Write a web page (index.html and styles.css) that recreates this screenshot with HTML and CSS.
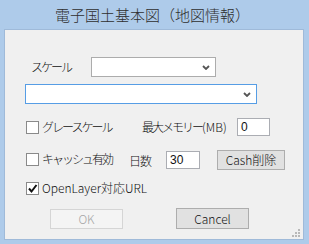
FILE: index.html
```html
<!DOCTYPE html>
<html lang="ja">
<head>
    <meta charset="UTF-8">
    <title>電子国土基本図（地図情報）</title>
    <link rel="stylesheet" href="styles.css">
</head>
<body>
    <div class="window">
        <div class="titlebar">電子国土基本図（地図情報）</div>
        <div class="panel">
            <div class="row scale-row">
                <span class="label kana scale-label">スケール</span>
                <div class="select select-scale">
                    <svg class="chevron" width="8" height="5" viewBox="0 0 8 5"><path d="M1 1 L4 4 L7 1" fill="none" stroke="#555" stroke-width="1.8"/></svg>
                </div>
            </div>
            <div class="row">
                <div class="select select-map focus">
                    <svg class="chevron" width="8" height="5" viewBox="0 0 8 5"><path d="M1 1 L4 4 L7 1" fill="none" stroke="#555" stroke-width="1.8"/></svg>
                </div>
            </div>
            <div class="row opt-row gray-row">
                <span class="check"></span>
                <span class="label kana opt-label gray-label">グレースケール</span>
                <span class="label kana mem-label">最大メモリー<span class="latin">(MB)</span></span>
                <span class="textbox mem-box">0</span>
            </div>
            <div class="row opt-row cache-row">
                <span class="check"></span>
                <span class="label kana opt-label cache-label">キャッシュ有効</span>
                <span class="label days-label">日数</span>
                <span class="textbox days-box">30</span>
                <button class="btn cash-btn">Cash削除</button>
            </div>
            <div class="row opt-row url-row">
                <span class="check checked">
                    <svg width="11" height="11" viewBox="0 0 11 11"><path d="M2 5.5 L4.5 8.5 L9.5 2" fill="none" stroke="#111" stroke-width="2"/></svg>
                </span>
                <span class="label opt-label latin">OpenLayer対応URL</span>
            </div>
            <div class="row button-row">
                <button class="btn dialog-btn" disabled>OK</button>
                <button class="btn dialog-btn cancel-btn">Cancel</button>
            </div>
            <svg class="grip" width="8" height="8" viewBox="0 0 8 8">
                <rect x="6" y="0" width="2" height="2" fill="#b8b8b8"/>
                <rect x="3" y="3" width="2" height="2" fill="#b8b8b8"/>
                <rect x="6" y="3" width="2" height="2" fill="#b8b8b8"/>
                <rect x="0" y="6" width="2" height="2" fill="#b8b8b8"/>
                <rect x="3" y="6" width="2" height="2" fill="#b8b8b8"/>
                <rect x="6" y="6" width="2" height="2" fill="#b8b8b8"/>
            </svg>
        </div>
    </div>
</body>
</html>
```

FILE: styles.css
```css
* {
    box-sizing: border-box;
}

body {
    margin: 0;
    padding: 0;
    font-family: "Noto Sans CJK JP", sans-serif;
    font-size: 12px;
    font-weight: 300;
    color: #111;
}

.window {
    width: 309px;
    height: 244px;
    background: #aecbea;
    padding: 0 5px 4px 4px;
    display: flex;
    flex-direction: column;
}

.titlebar {
    height: 29px;
    line-height: 29px;
    text-align: center;
    font-size: 15px;
    color: #2e2e2e;
    padding-right: 3px;
}

.panel {
    position: relative;
    flex: 1;
    background: #f0f0f0;
    border: 1px solid #9fbad9;
    padding: 27px 0 0 20px;
}

.row {
    display: flex;
    align-items: center;
}

.label {
    line-height: 14px;
    white-space: nowrap;
    letter-spacing: -1px;
}

.label.kana {
    letter-spacing: -2px;
}

.label .latin,
.label.latin {
    letter-spacing: 0;
}

.scale-row {
    height: 20px;
}

.scale-label {
    width: 60px;
    margin-left: 6px;
}

.select {
    position: relative;
    height: 20px;
    background: #fff;
    border: 1px solid #acacac;
}

.select-scale {
    width: 125px;
}

.select-map {
    width: 232px;
    margin-top: 7px;
}

.select.focus {
    border-color: #569de5;
}

.chevron {
    position: absolute;
    right: 5px;
    top: 7px;
}

.opt-row .check {
    margin-left: 1px;
}

.check {
    width: 13px;
    height: 13px;
    border: 1px solid #8a8a8a;
    background: #fff;
    display: flex;
    align-items: center;
    justify-content: center;
}

.opt-label {
    margin-left: 3px;
}

.gray-row {
    height: 18px;
    margin-top: 14px;
}

.gray-label {
    width: 100px;
}

.mem-label {
    width: 95px;
}

.textbox {
    height: 18px;
    background: #fff;
    border: 1px solid #abadb3;
    line-height: 16px;
    padding-left: 3px;
    font-family: "Liberation Sans", sans-serif;
    font-size: 12px;
    font-weight: 400;
}

.mem-box {
    width: 33px;
}

.cache-row {
    height: 20px;
    margin-top: 13px;
}

.cache-label {
    width: 87px;
}

.days-label {
    width: 37px;
    padding-top: 4px;
}

.days-box {
    width: 34px;
    margin-top: 2px;
}

.btn {
    height: 20px;
    padding: 0;
    background: #e1e1e1;
    border: 1px solid #adadad;
    font-family: "Noto Sans CJK JP", sans-serif;
    font-size: 12px;
    font-weight: 300;
    line-height: 16px;
    color: #111;
}

.cash-btn {
    width: 68px;
    margin-left: 17px;
    margin-top: 1px;
}

.url-row {
    height: 14px;
    margin-top: 12px;
}

.button-row {
    margin-top: 13px;
    padding-left: 25px;
}

.dialog-btn {
    width: 73px;
}

.dialog-btn:disabled {
    background: #f4f4f4;
    border-color: #d5d5d5;
    color: #a5a5a5;
}

.cancel-btn {
    margin-left: 53px;
    height: 21px;
}

.grip {
    position: absolute;
    right: 3px;
    bottom: 2px;
}
```
